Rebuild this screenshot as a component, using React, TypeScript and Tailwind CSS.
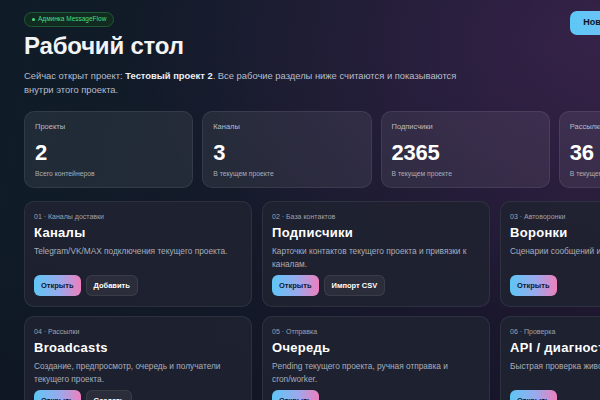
import React from "react";

const stats = [
  { label: "Проекты", value: "2", sub: "Всего контейнеров" },
  { label: "Каналы", value: "3", sub: "В текущем проекте" },
  { label: "Подписчики", value: "2365", sub: "В текущем проекте" },
  { label: "Рассылки", value: "36", sub: "В текущем проекте" },
];

const modules = [
  {
    tag: "01 · Каналы доставки",
    title: "Каналы",
    desc: "Telegram/VK/MAX подключения текущего проекта.",
    second: "Добавить",
  },
  {
    tag: "02 · База контактов",
    title: "Подписчики",
    desc: "Карточки контактов текущего проекта и привязки к каналам.",
    second: "Импорт CSV",
  },
  {
    tag: "03 · Автоворонки",
    title: "Воронки",
    desc: "Сценарии сообщений и триггеры текущего проекта.",
    second: null,
  },
  {
    tag: "04 · Рассылки",
    title: "Broadcasts",
    desc: "Создание, предпросмотр, очередь и получатели текущего проекта.",
    second: "Создать",
  },
  {
    tag: "05 · Отправка",
    title: "Очередь",
    desc: "Pending текущего проекта, ручная отправка и cron/worker.",
    second: null,
  },
  {
    tag: "06 · Проверка",
    title: "API / диагностика",
    desc: "Быстрая проверка живости API и служебных точек.",
    second: null,
  },
];

export default function App() {
  return (
    <div
      className="relative w-[600px] h-[400px] overflow-hidden text-white bg-[linear-gradient(100deg,#0f1c27_0%,#141a2a_40%,#1c1930_75%,#221a33_100%)]"
      style={{ fontFamily: '"Liberation Sans", Arial, sans-serif' }}
    >
      <div className="pointer-events-none absolute inset-0 bg-[radial-gradient(ellipse_at_100%_10%,rgba(120,60,140,0.25),transparent_55%)]" />
      <div className="pointer-events-none absolute inset-0 bg-[linear-gradient(180deg,transparent_60%,rgba(10,14,26,0.35)_100%)]" />
      <div className="relative w-[704px] ml-6 pt-3">
        <div className="flex items-start justify-between">
          <div className="flex flex-col">
            <div className="self-start h-[15px] flex items-center gap-[3px] px-[7px] rounded-full bg-[#12301f]/80 border border-[#1f5a36] text-[#4ade80] text-[6.5px] leading-none">
              <span className="w-[3px] h-[3px] rounded-full bg-[#4ade80]" />
              Админка MessageFlow
            </div>
            <h1 className="mt-[5px] text-[24px] leading-[28px] font-bold tracking-[-0.2px] text-[#f3f4f6]">
              Рабочий стол
            </h1>
            <p className="mt-[9px] w-[445px] text-[9.4px] leading-[14px] text-[#b8bcc8]">
              Сейчас открыт проект: <b className="text-[#eceef3]">Тестовый проект 2</b>. Все рабочие разделы ниже считаются и показываются внутри этого проекта.
            </p>
          </div>
          <div className="flex items-center gap-2 mt-[-1px]">
            <button className="w-[100px] h-[24px] rounded-[7px] bg-[linear-gradient(90deg,#5cc8f7,#8fb5f0)] text-[#0c1424] text-[9px] font-bold">
              Новая рассылка
            </button>
            <button className="w-[50px] h-[24px] rounded-[7px] bg-[#2a2d3a] border border-white/10 text-white text-[9px] font-bold">
              Выйти
            </button>
          </div>
        </div>

        <div className="mt-[14px] grid grid-cols-4 gap-[9px]">
          {stats.map((s) => (
            <div
              key={s.label}
              className="h-[77px] rounded-[10px] bg-white/[0.07] border border-white/[0.08] px-[10px] pt-[10px]"
            >
              <div className="text-[7.5px] leading-[10px] text-[#b9bcc7]">{s.label}</div>
              <div className="mt-[10px] text-[22px] leading-[22px] font-bold text-white tracking-[-0.2px]">
                {s.value}
              </div>
              <div className="mt-[5px] text-[6.8px] leading-[9px] text-[#a9adb9]">{s.sub}</div>
            </div>
          ))}
        </div>

        <div className="mt-[13px] grid grid-cols-3 gap-x-[10px] gap-y-[9px]">
          {modules.map((m) => (
            <div
              key={m.tag}
              className="h-[106px] flex flex-col rounded-[10px] bg-[#1f2231]/90 border border-white/[0.07] px-[9px] pt-[10px] pb-[10px]"
            >
              <div className="text-[7px] leading-[9px] text-[#9ea2ae]">{m.tag}</div>
              <div className="mt-[4px] text-[13px] leading-[15px] font-bold text-white tracking-[0.3px]">
                {m.title}
              </div>
              <div className="mt-[5px] text-[8.3px] leading-[13px] text-[#a9adb9]">{m.desc}</div>
              <div className="mt-auto flex gap-[5px]">
                <button className="h-[21px] px-[7px] rounded-[6px] bg-[linear-gradient(90deg,#5ec6f6,#9aa9ec_55%,#ef7fbd)] text-[#0e1730] text-[7.5px] font-bold">
                  Открыть
                </button>
                {m.second && (
                  <button className="h-[21px] px-[7px] rounded-[6px] bg-[#2b2e3a] border border-white/[0.07] text-white text-[7.5px] font-bold">
                    {m.second}
                  </button>
                )}
              </div>
            </div>
          ))}
        </div>
      </div>
    </div>
  );
}
